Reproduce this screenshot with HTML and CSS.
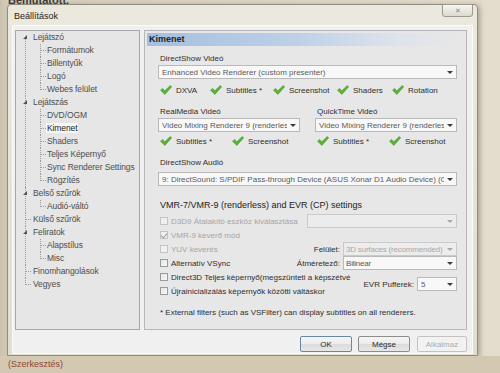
FILE: index.html
```html
<!DOCTYPE html>
<html lang="hu">
<head>
    <meta charset="UTF-8">
    <title>Beállítások</title>
    <link rel="stylesheet" href="styles.css">
</head>
<body>
    <div class="desk-top">Bemutatott.</div>

    <div class="window">
        <div class="titlebar">
            <span class="title">Beállítások</span>
            <span class="close">✕</span>
        </div>

        <div class="client">
            <div class="panes">
                <!-- Settings tree -->
                <ul class="tree">
                    <li class="open"><span class="row"><i class="exp"></i>Lejátszó</span>
                        <ul>
                            <li><span class="row">Formátumok</span></li>
                            <li><span class="row">Billentyűk</span></li>
                            <li><span class="row">Logó</span></li>
                            <li><span class="row">Webes felület</span></li>
                        </ul>
                    </li>
                    <li class="open"><span class="row"><i class="exp"></i>Lejátszás</span>
                        <ul>
                            <li><span class="row">DVD/OGM</span></li>
                            <li><span class="row sel"><b>Kimenet</b></span></li>
                            <li><span class="row">Shaders</span></li>
                            <li><span class="row">Teljes Képernyő</span></li>
                            <li><span class="row">Sync Renderer Settings</span></li>
                            <li><span class="row">Rögzítés</span></li>
                        </ul>
                    </li>
                    <li class="open"><span class="row"><i class="exp"></i>Belső szűrök</span>
                        <ul>
                            <li><span class="row">Audió-váltó</span></li>
                        </ul>
                    </li>
                    <li><span class="row">Külső szűrök</span></li>
                    <li class="open"><span class="row"><i class="exp"></i>Feliratok</span>
                        <ul>
                            <li><span class="row">Alapstílus</span></li>
                            <li><span class="row">Misc</span></li>
                        </ul>
                    </li>
                    <li><span class="row">Finomhangolások</span></li>
                    <li><span class="row">Vegyes</span></li>
                </ul>

                <!-- Output page -->
                <div class="page">
                    <div class="page-head">Kimenet</div>
                    <div class="page-body">
                        <div class="label first">DirectShow Videó</div>
                        <div class="combo"><span class="txt">Enhanced Video Renderer (custom presenter)</span><i class="arr"></i></div>
                        <div class="checks main">
                            <span class="ok"><svg viewBox="0 0 12 10"><path d="M0.5 5.2 L2.6 3.4 L4.8 5.8 L10.3 0.4 L11.7 1.8 L4.9 9.4 Z"/></svg>DXVA</span>
                            <span class="ok"><svg viewBox="0 0 12 10"><path d="M0.5 5.2 L2.6 3.4 L4.8 5.8 L10.3 0.4 L11.7 1.8 L4.9 9.4 Z"/></svg>Subtitles *</span>
                            <span class="ok"><svg viewBox="0 0 12 10"><path d="M0.5 5.2 L2.6 3.4 L4.8 5.8 L10.3 0.4 L11.7 1.8 L4.9 9.4 Z"/></svg>Screenshot</span>
                            <span class="ok"><svg viewBox="0 0 12 10"><path d="M0.5 5.2 L2.6 3.4 L4.8 5.8 L10.3 0.4 L11.7 1.8 L4.9 9.4 Z"/></svg>Shaders</span>
                            <span class="ok"><svg viewBox="0 0 12 10"><path d="M0.5 5.2 L2.6 3.4 L4.8 5.8 L10.3 0.4 L11.7 1.8 L4.9 9.4 Z"/></svg>Rotation</span>
                        </div>

                        <div class="two-col">
                            <div class="col">
                                <div class="label">RealMedia Videó</div>
                                <div class="combo"><span class="txt">Video Mixing Renderer 9 (renderless)</span><i class="arr"></i></div>
                                <div class="checks pair">
                                    <span class="ok"><svg viewBox="0 0 12 10"><path d="M0.5 5.2 L2.6 3.4 L4.8 5.8 L10.3 0.4 L11.7 1.8 L4.9 9.4 Z"/></svg>Subtitles *</span>
                                    <span class="ok"><svg viewBox="0 0 12 10"><path d="M0.5 5.2 L2.6 3.4 L4.8 5.8 L10.3 0.4 L11.7 1.8 L4.9 9.4 Z"/></svg>Screenshot</span>
                                </div>
                            </div>
                            <div class="col">
                                <div class="label">QuickTime Videó</div>
                                <div class="combo"><span class="txt">Video Mixing Renderer 9 (renderless)</span><i class="arr"></i></div>
                                <div class="checks pair">
                                    <span class="ok"><svg viewBox="0 0 12 10"><path d="M0.5 5.2 L2.6 3.4 L4.8 5.8 L10.3 0.4 L11.7 1.8 L4.9 9.4 Z"/></svg>Subtitles *</span>
                                    <span class="ok"><svg viewBox="0 0 12 10"><path d="M0.5 5.2 L2.6 3.4 L4.8 5.8 L10.3 0.4 L11.7 1.8 L4.9 9.4 Z"/></svg>Screenshot</span>
                                </div>
                            </div>
                        </div>

                        <div class="label audio">DirectShow Audió</div>
                        <div class="combo"><span class="txt">9: DirectSound: S/PDIF Pass-through Device (ASUS Xonar D1 Audio Device) (002C)</span><i class="arr"></i></div>

                        <div class="section-title">VMR-7/VMR-9 (renderless) and EVR (CP) settings</div>
                        <div class="vmr">
                            <label class="cb r1 off"><i class="box"></i>D3D9 Átalakító eszköz kiválasztása</label>
                            <label class="cb r2 off"><i class="box checked"></i>VMR-9 keverő mód</label>
                            <label class="cb r3 off"><i class="box"></i>YUV keverés</label>
                            <label class="cb r4"><i class="box"></i>Alternatív VSync</label>
                            <label class="cb r5"><i class="box"></i>Direct3D Teljes képernyő(megszünteti a képszétvé</label>
                            <label class="cb r6"><i class="box"></i>Újrainicializálás képernyők közötti váltáskor</label>

                            <div class="ctl r1"><div class="combo off d3d"><span class="txt"></span><i class="arr"></i></div></div>
                            <div class="ctl r3"><span>Felület:</span><div class="combo off mid"><span class="txt">3D surfaces (recommended)</span><i class="arr"></i></div></div>
                            <div class="ctl r4"><span>Átméretező:</span><div class="combo mid"><span class="txt">Bilinear</span><i class="arr"></i></div></div>
                            <div class="ctl evr"><span>EVR Pufferek:</span><div class="combo small"><span class="txt">5</span><i class="arr"></i></div></div>
                        </div>

                        <div class="note">* External filters (such as VSFilter) can display subtitles on all renderers.</div>
                    </div>
                </div>
            </div>

            <div class="buttons">
                <button class="btn default">OK</button>
                <button class="btn">Mégse</button>
                <button class="btn" disabled>Alkalmaz</button>
            </div>
        </div>
    </div>

    <div class="desk-bottom">(Szerkesztés)</div>
</body>
</html>
```

FILE: styles.css
```css
/* Desktop behind the dialog */
* {
    box-sizing: border-box;
}

body {
    margin: 0;
    width: 500px;
    height: 373px;
    overflow: hidden;
    background: linear-gradient(to right, #c9c1ac 0, #d6cebb 7px, #e4ddcd 100%);
    font-family: "Liberation Sans", Arial, sans-serif;
    font-size: 8px;
    color: #333;
}

.desk-top {
    height: 4px;
    overflow: hidden;
    padding-left: 8px;
    font-size: 11px;
    font-weight: bold;
    line-height: 0;
    color: #3a3a3a;
}

.desk-bottom {
    height: 17px;
    padding: 3px 0 0 8px;
    font-size: 9px;
    color: #93422f;
    background: #d3c9b2;
}

/* Window frame */
.window {
    margin-left: 7px;
    width: 471px;
    height: 352px;
    padding: 0 4px 1px;
    display: flex;
    flex-direction: column;
    background: linear-gradient(#ebe8dd, #e1ddcf);
    border: 1px solid #8f8c80;
    border-radius: 4px 4px 0 0;
    box-shadow: 2px 1px 5px rgba(60, 50, 30, 0.35);
}

.titlebar {
    height: 20px;
    display: flex;
    align-items: flex-start;
    justify-content: space-between;
}

.title {
    padding: 6px 0 0 2px;
    font-size: 9px;
    color: #1f1f1f;
}

.close {
    width: 31px;
    height: 13px;
    margin-top: -1px;
    display: flex;
    align-items: center;
    justify-content: center;
    font-size: 7px;
    color: #8a8a8a;
    background: linear-gradient(#f7f6f1, #dcd9cf);
    border: 1px solid #9c998e;
    border-radius: 0 0 3px 3px;
}

.client {
    flex: 1;
    display: flex;
    flex-direction: column;
    padding: 4px 5px 0 2px;
    background: #f0f0f0;
    border: 1px solid #fbfbfb;
}

.panes {
    height: 300px;
    display: flex;
    gap: 4px;
}

/* Tree */
.tree,
.tree ul {
    list-style: none;
    margin: 0;
    padding: 0;
}

.tree {
    flex: none;
    width: 125px;
    background: #e6e6e6;
    border: 1px solid #a8a8a8;
    overflow: hidden;
    color: #4d4d4d;
}

.tree li {
    position: relative;
}

.tree .row {
    display: block;
    height: 13px;
    line-height: 13px;
    padding-left: 17px;
    white-space: nowrap;
    font-size: 8.5px;
    letter-spacing: -0.1px;
}

.tree ul .row {
    padding-left: 31px;
}

.tree .sel b {
    font-weight: normal;
    color: #222;
    background: #f7f7f7;
    padding: 0 1px;
    margin-left: -1px;
}

/* dotted connector lines */
.tree > li::before,
.tree ul li::before {
    content: '';
    position: absolute;
    top: 0;
    bottom: 0;
    left: 9px;
    border-left: 1px dotted #9c9c9c;
}

.tree > li:first-child::before {
    top: 7px;
}

.tree > li:last-child::before,
.tree ul li:last-child::before {
    bottom: auto;
    height: 7px;
}

.tree ul li::before {
    left: 24px;
}

.tree > li:not(.open)::after,
.tree ul li::after {
    content: '';
    position: absolute;
    top: 6px;
    left: 10px;
    width: 5px;
    border-top: 1px dotted #9c9c9c;
}

.tree ul li::after {
    left: 25px;
}

.tree .exp {
    position: absolute;
    top: 4px;
    left: 7px;
    width: 0;
    height: 0;
    border-left: 4px solid transparent;
    border-bottom: 4px solid #555;
    z-index: 1;
}

/* Page on the right */
.page {
    flex: 1;
    min-width: 0;
    display: flex;
    flex-direction: column;
    padding: 1px;
    background: #e7e7e7;
    border: 1px solid #b6b6b6;
}

.page-head {
    height: 13px;
    line-height: 13px;
    margin: 1px 0 0 1px;
    padding-left: 2px;
    font-size: 9px;
    font-weight: bold;
    color: #1d1d1d;
    background: linear-gradient(to right, #a6bfdf 0%, #bccfe7 45%, #dfe4eb 80%, #e7e7e7 100%);
}

.page-body {
    display: flex;
    flex-direction: column;
    padding: 0 8px 0 12px;
}

.label {
    height: 11px;
    line-height: 11px;
    margin: 10px 0 1px 2px;
    color: #2e2e2e;
}

.label.first {
    margin-top: 7px;
}

.label.audio {
    margin-top: 10px;
    margin-bottom: 4px;
}

.combo {
    height: 14px;
    display: flex;
    align-items: center;
    padding-left: 3px;
    background: #f8f8f8;
    border: 1px solid #b9b9b9;
    color: #5a5a5a;
    white-space: nowrap;
    overflow: hidden;
}

.combo .txt {
    flex: 1;
    overflow: hidden;
}

.combo .arr {
    flex: none;
    width: 12px;
    height: 12px;
    position: relative;
}

.combo .arr::before {
    content: '';
    position: absolute;
    top: 5px;
    left: 3px;
    border-left: 3px solid transparent;
    border-right: 3px solid transparent;
    border-top: 3px solid #3c3c3c;
}

.combo.off {
    background: #ececec;
    border-color: #cacaca;
    color: #a8a8a8;
}

.combo.off .arr::before {
    border-top-color: #a8a8a8;
}

.combo.d3d {
    width: 150px;
}

.combo.mid {
    width: 114px;
    padding-left: 2px;
    letter-spacing: -0.2px;
}

.combo.small {
    width: 40px;
}

.checks {
    height: 12px;
    margin-top: 5px;
    display: grid;
    align-items: center;
    padding-left: 2px;
    color: #2e2e2e;
}

.checks.main {
    grid-template-columns: 50px 63px 64px 55px auto;
}

.checks.pair {
    margin-top: 3px;
    grid-template-columns: 72px auto;
}

.ok {
    display: flex;
    align-items: center;
    gap: 4px;
    white-space: nowrap;
}

.ok svg {
    flex: none;
    width: 12px;
    height: 10px;
    fill: #5bb336;
    stroke: #3d8a22;
    stroke-width: 0.5;
}

.two-col {
    display: flex;
    gap: 15px;
}

.col {
    flex: 1;
    min-width: 0;
    display: flex;
    flex-direction: column;
}

.section-title {
    height: 12px;
    line-height: 12px;
    margin: 13px 0 3px 2px;
    font-size: 9px;
    color: #222;
}

/* VMR grid: 7px half rows, checkbox rows span two */
.vmr {
    display: grid;
    grid-template-rows: repeat(12, 7px);
    grid-template-columns: 1fr;
    padding-left: 2px;
}

.vmr > * {
    grid-column: 1;
}

.cb {
    display: flex;
    align-items: center;
    gap: 3px;
    white-space: nowrap;
    color: #2e2e2e;
}

.cb.off {
    color: #a5a5a5;
}

.box {
    width: 8px;
    height: 8px;
    flex: none;
    background: linear-gradient(135deg, #e4e4e4, #fafafa);
    border: 1px solid #9a9a9a;
    position: relative;
}

.cb.off .box {
    border-color: #c4c4c4;
    background: #f0f0f0;
}

.box.checked::after {
    content: '';
    position: absolute;
    left: 1px;
    top: 0;
    width: 3px;
    height: 5px;
    border-right: 1px solid #9a9a9a;
    border-bottom: 1px solid #9a9a9a;
    transform: rotate(40deg);
}

.r1 { grid-row: 1 / span 2; }
.r2 { grid-row: 3 / span 2; }
.r3 { grid-row: 5 / span 2; }
.r4 { grid-row: 7 / span 2; }
.r5 { grid-row: 9 / span 2; }
.r6 { grid-row: 11 / span 2; }

.ctl {
    justify-self: end;
    display: flex;
    align-items: center;
    gap: 3px;
    color: #2e2e2e;
}

.ctl.evr {
    grid-row: 10 / span 2;
}

.note {
    height: 12px;
    line-height: 12px;
    margin: 9px 0 0 2px;
    color: #2e2e2e;
}

/* Dialog buttons */
.buttons {
    display: flex;
    justify-content: flex-end;
    gap: 6px;
    margin-top: 6px;
}

.btn {
    width: 52px;
    height: 16px;
    padding: 0;
    font: inherit;
    color: #2a2a2a;
    background: linear-gradient(#f5f5f5, #ebebeb 50%, #dcdcdc 51%, #e6e6e6);
    border: 1px solid #8c8c8c;
    border-radius: 2px;
}

.btn.default {
    border-color: #6a87a8;
}

.btn:disabled {
    width: 50px;
    margin-left: 1px;
    color: #ababab;
    background: #f2f2f2;
    border-color: #c2c2c2;
}
```
